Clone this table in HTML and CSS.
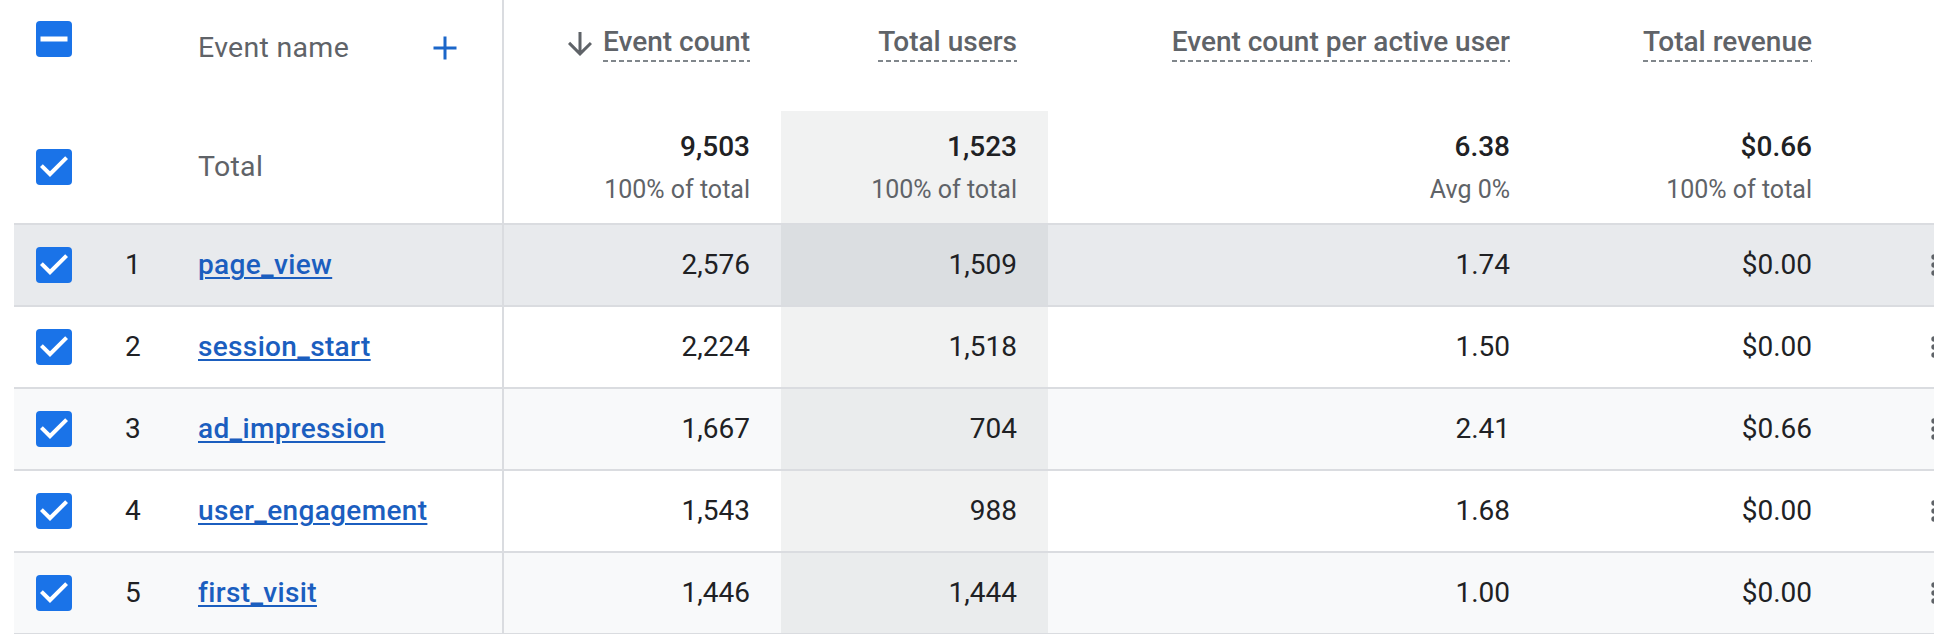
FILE: index.html
```html
<!DOCTYPE html>
<html>
<head>
<meta charset="utf-8">
<title>Events</title>
<link rel="stylesheet" href="styles.css">
</head>
<body>
<div class="table">
  <div class="row head">
    <div class="c-check">
      <svg class="cb" viewBox="0 0 36 36" width="36" height="36"><rect width="36" height="36" rx="4" fill="#1a73e8"/><rect x="4.5" y="15.5" width="27" height="5" fill="#fff"/></svg>
    </div>
    <div class="c-num"></div>
    <div class="c-name">
      <span class="dim-title">Event name</span>
      <svg class="plus" viewBox="0 0 24 24" width="24" height="24"><path d="M12 0.5V23.5M0.5 12H23.5" stroke="#1b66c9" stroke-width="3" fill="none"/></svg>
    </div>
    <div class="c-metric">
      <svg class="arrow" viewBox="4 4 16 16" width="24" height="24"><path d="M20 12l-1.41-1.41L13 16.17V4h-2v12.17l-5.58-5.59L4 12l8 8 8-8z" fill="#5f6368"/></svg>
      <span class="h-label">Event count</span>
    </div>
    <div class="c-metric"><span class="h-label">Total users</span></div>
    <div class="c-metric"><span class="h-label">Event count per active user</span></div>
    <div class="c-metric"><span class="h-label">Total revenue</span></div>
    <div class="c-more"></div>
  </div>

  <div class="row total">
    <div class="c-check">
      <svg class="cb" viewBox="3 3 18 18" width="36" height="36"><rect x="3" y="3" width="18" height="18" rx="2" fill="#1a73e8"/><path d="M10 17l-5-5 1.41-1.41L10 14.17l7.59-7.59L19 8z" fill="#fff"/></svg>
    </div>
    <div class="c-num"></div>
    <div class="c-name"><span class="dim-title">Total</span></div>
    <div class="c-metric"><span class="t-val">9,503</span><span class="t-sub">100% of total</span></div>
    <div class="c-metric shade"><span class="t-val">1,523</span><span class="t-sub">100% of total</span></div>
    <div class="c-metric"><span class="t-val">6.38</span><span class="t-sub">Avg 0%</span></div>
    <div class="c-metric"><span class="t-val">$0.66</span><span class="t-sub">100% of total</span></div>
    <div class="c-more"></div>
  </div>

  <div class="row data hover">
    <div class="c-check"><svg class="cb" viewBox="3 3 18 18" width="36" height="36"><rect x="3" y="3" width="18" height="18" rx="2" fill="#1a73e8"/><path d="M10 17l-5-5 1.41-1.41L10 14.17l7.59-7.59L19 8z" fill="#fff"/></svg></div>
    <div class="c-num">1</div>
    <div class="c-name"><a class="ev-link" href="#">page_view</a></div>
    <div class="c-metric">2,576</div>
    <div class="c-metric shade">1,509</div>
    <div class="c-metric">1.74</div>
    <div class="c-metric">$0.00</div>
    <div class="c-more"><svg class="kebab" viewBox="0 0 24 24" width="32" height="32"><circle cx="12" cy="6" r="2" fill="#5f6368"/><circle cx="12" cy="12" r="2" fill="#5f6368"/><circle cx="12" cy="18" r="2" fill="#5f6368"/></svg></div>
  </div>

  <div class="row data">
    <div class="c-check"><svg class="cb" viewBox="3 3 18 18" width="36" height="36"><rect x="3" y="3" width="18" height="18" rx="2" fill="#1a73e8"/><path d="M10 17l-5-5 1.41-1.41L10 14.17l7.59-7.59L19 8z" fill="#fff"/></svg></div>
    <div class="c-num">2</div>
    <div class="c-name"><a class="ev-link" href="#">session_start</a></div>
    <div class="c-metric">2,224</div>
    <div class="c-metric shade">1,518</div>
    <div class="c-metric">1.50</div>
    <div class="c-metric">$0.00</div>
    <div class="c-more"><svg class="kebab" viewBox="0 0 24 24" width="32" height="32"><circle cx="12" cy="6" r="2" fill="#5f6368"/><circle cx="12" cy="12" r="2" fill="#5f6368"/><circle cx="12" cy="18" r="2" fill="#5f6368"/></svg></div>
  </div>

  <div class="row data alt">
    <div class="c-check"><svg class="cb" viewBox="3 3 18 18" width="36" height="36"><rect x="3" y="3" width="18" height="18" rx="2" fill="#1a73e8"/><path d="M10 17l-5-5 1.41-1.41L10 14.17l7.59-7.59L19 8z" fill="#fff"/></svg></div>
    <div class="c-num">3</div>
    <div class="c-name"><a class="ev-link" href="#">ad_impression</a></div>
    <div class="c-metric">1,667</div>
    <div class="c-metric shade">704</div>
    <div class="c-metric">2.41</div>
    <div class="c-metric">$0.66</div>
    <div class="c-more"><svg class="kebab" viewBox="0 0 24 24" width="32" height="32"><circle cx="12" cy="6" r="2" fill="#5f6368"/><circle cx="12" cy="12" r="2" fill="#5f6368"/><circle cx="12" cy="18" r="2" fill="#5f6368"/></svg></div>
  </div>

  <div class="row data">
    <div class="c-check"><svg class="cb" viewBox="3 3 18 18" width="36" height="36"><rect x="3" y="3" width="18" height="18" rx="2" fill="#1a73e8"/><path d="M10 17l-5-5 1.41-1.41L10 14.17l7.59-7.59L19 8z" fill="#fff"/></svg></div>
    <div class="c-num">4</div>
    <div class="c-name"><a class="ev-link" href="#">user_engagement</a></div>
    <div class="c-metric">1,543</div>
    <div class="c-metric shade">988</div>
    <div class="c-metric">1.68</div>
    <div class="c-metric">$0.00</div>
    <div class="c-more"><svg class="kebab" viewBox="0 0 24 24" width="32" height="32"><circle cx="12" cy="6" r="2" fill="#5f6368"/><circle cx="12" cy="12" r="2" fill="#5f6368"/><circle cx="12" cy="18" r="2" fill="#5f6368"/></svg></div>
  </div>

  <div class="row data alt last">
    <div class="c-check"><svg class="cb" viewBox="3 3 18 18" width="36" height="36"><rect x="3" y="3" width="18" height="18" rx="2" fill="#1a73e8"/><path d="M10 17l-5-5 1.41-1.41L10 14.17l7.59-7.59L19 8z" fill="#fff"/></svg></div>
    <div class="c-num">5</div>
    <div class="c-name"><a class="ev-link" href="#">first_visit</a></div>
    <div class="c-metric">1,446</div>
    <div class="c-metric shade">1,444</div>
    <div class="c-metric">1.00</div>
    <div class="c-metric">$0.00</div>
    <div class="c-more"><svg class="kebab" viewBox="0 0 24 24" width="32" height="32"><circle cx="12" cy="6" r="2" fill="#5f6368"/><circle cx="12" cy="12" r="2" fill="#5f6368"/><circle cx="12" cy="18" r="2" fill="#5f6368"/></svg></div>
  </div>
</div>
</body>
</html>
```

FILE: styles.css
```css
html, body {
  margin: 0;
  padding: 0;
  background: #fff;
  overflow: hidden;
}

body {
  font-family: Roboto, "Liberation Sans", Arial, sans-serif;
  color: #202124;
}

.table {
  padding-left: 14px;
}

.row {
  display: grid;
  grid-template-columns: 111px 73px 306px 277px 267px 493px 302px minmax(0, 1fr);
  box-sizing: border-box;
}

.row > div {
  box-sizing: border-box;
  min-width: 0;
}

.c-name {
  border-right: 2px solid #dadce0;
}

.cb {
  display: block;
}

/* header row */
.head {
  height: 111px;
  align-items: stretch;
}

.head .c-check {
  padding: 21px 0 0 22px;
}

.head .c-name {
  display: flex;
  align-items: flex-start;
  padding: 30px 45px 0 0;
}

.dim-title {
  font-size: 28.5px;
  line-height: 36px;
  color: #5f6368;
  letter-spacing: 0.3px;
}

.plus {
  margin-left: auto;
  margin-top: 6px;
  display: block;
}

.head .c-metric {
  display: flex;
  justify-content: flex-end;
  align-items: flex-start;
  padding: 26px 31px 0 0;
}

.arrow {
  display: block;
  margin: 6px 11px 0 0;
}

.h-label {
  display: inline-block;
  font-size: 28px;
  font-weight: 500;
  line-height: 32px;
  color: #5f6368;
  padding-bottom: 4px;
  background-image: repeating-linear-gradient(to right, #80868b 0 5px, transparent 5px 8px);
  background-size: 100% 2px;
  background-position: left bottom;
  background-repeat: no-repeat;
  white-space: nowrap;
}

/* total row */
.total {
  height: 112px;
}

.total .c-check {
  display: flex;
  align-items: center;
  padding-left: 22px;
}

.total .c-name {
  display: flex;
  align-items: center;
}

.total .c-metric {
  display: flex;
  flex-direction: column;
  align-items: flex-end;
  padding: 18px 31px 0 0;
}

.t-val {
  font-size: 28px;
  line-height: 36px;
  font-weight: 500;
  color: #202124;
}

.t-sub {
  margin-top: 9px;
  font-size: 25px;
  line-height: 32px;
  color: #5f6368;
}

.shade {
  background: rgba(60, 64, 67, 0.07);
}

/* data rows */
.data {
  height: 82px;
  border-top: 2px solid #dadce0;
  background: #fff;
}

.data.alt {
  background: #f8f9fa;
}

.data.hover {
  background: #e8eaed;
}

.data.last {
  border-bottom: 2px solid #dadce0;
  height: 84px;
}

.data > div {
  display: flex;
  align-items: center;
}

.data .c-check {
  padding-left: 22px;
}

.c-num {
  font-size: 28px;
  line-height: 36px;
  color: #202124;
}

.ev-link {
  font-size: 28px;
  line-height: 36px;
  font-weight: 500;
  letter-spacing: 0.35px;
  color: #1b5ebf;
  text-decoration: underline;
  text-decoration-thickness: 2px;
  text-underline-offset: 3px;
}

.data .c-metric {
  justify-content: flex-end;
  padding-right: 31px;
  font-size: 28px;
  line-height: 36px;
  color: #202124;
}

.c-more {
  overflow: hidden;
}

.data .c-more {
  padding-left: 75px;
}

.kebab {
  display: block;
  flex: none;
}
```
